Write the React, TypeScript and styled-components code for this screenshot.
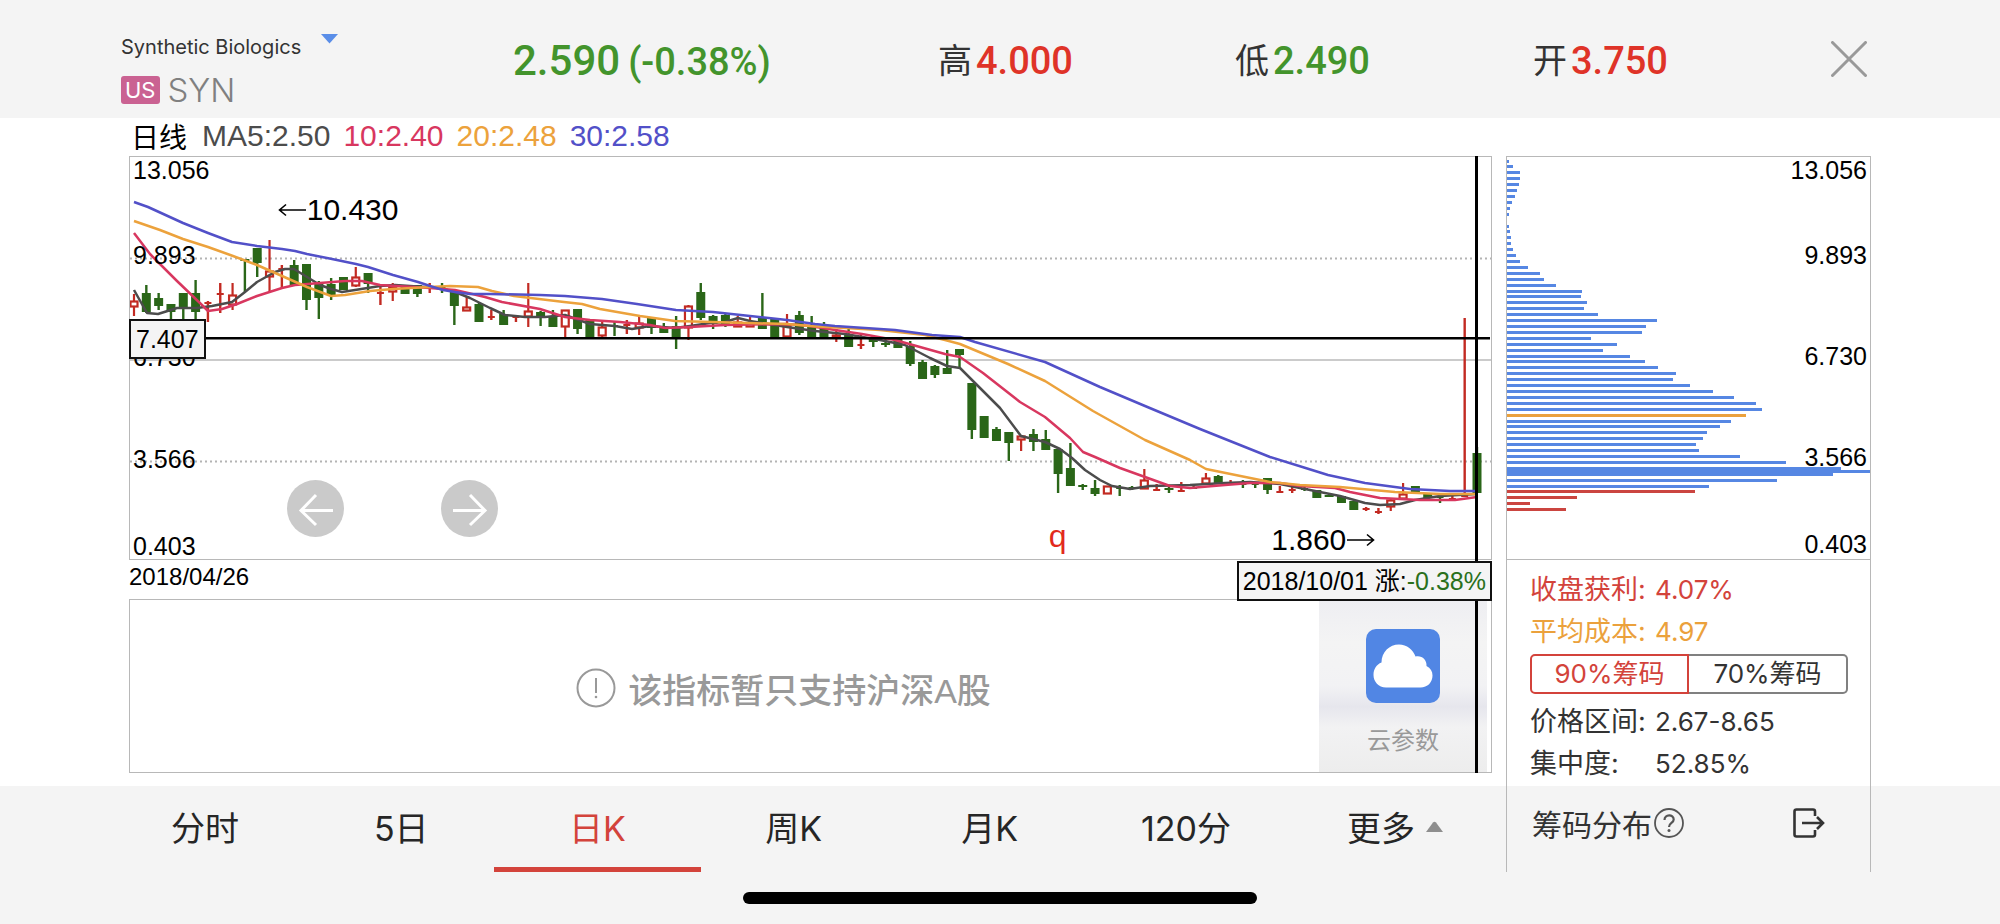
import React, { useState } from "react";
import styled, { createGlobalStyle } from "styled-components";

const sans = `"Liberation Sans", "Noto Sans CJK SC", sans-serif`;
const ui = `Inter, "Noto Sans CJK SC", sans-serif`;
const digits = `Roboto, "Noto Sans CJK SC", sans-serif`;

const color = {
  bar: "#f4f4f4",
  line: "#b8b8b8",
  text: "#333333",
  muted: "#999999",
  up: "#df3328",
  down: "#43942c",
  accent: "#d3433b",
  orange: "#eba13c",
  blue: "#5687e3",
  candleUp: "#c22a22",
  candleDown: "#2a6618",
  ma5: "#4c4c4c",
  ma10: "#d8375f",
  ma20: "#eca23c",
  ma30: "#5250c8",
};

const GlobalStyle = createGlobalStyle`
  *, *::before, *::after { box-sizing: border-box; }
  body { margin: 0; background: ${color.bar}; }
  button { margin: 0; padding: 0; border: 0; background: none; font: inherit; color: inherit; cursor: pointer; }
  svg { display: block; }
`;

const Page = styled.div`
  min-height: 100vh;
  display: flex;
  flex-direction: column;
  background: ${color.bar};
  color: ${color.text};
  font-family: ${ui};
`;

/* ---------- header ---------- */

const Header = styled.header`
  display: grid;
  grid-template-columns: 392fr 425fr 297fr 298fr 298fr 36px;
  align-items: center;
  min-height: 118px;
  padding: 0 133px 0 121px;
`;

const Identity = styled.div`
  align-self: start;
  padding-top: 34px;
`;

const NameButton = styled.button`
  display: flex;
  align-items: flex-start;
  gap: 20px;
  font-size: 20px;
  line-height: 26px;
`;

const Ticker = styled.div`
  display: flex;
  align-items: center;
  gap: 8px;
  margin-top: 16px;
  height: 28px;
  font-size: 33px;
  font-weight: 300;
  color: #808080;
`;

const Market = styled.span`
  padding: 0 4px;
  border-radius: 3px;
  background: #ca6292;
  color: #ffffff;
  font-size: 22px;
  font-weight: 400;
  line-height: 28px;
`;

const Price = styled.div`
  display: flex;
  align-items: baseline;
  gap: 8px;
  padding-top: 4px;
  font-family: ${digits};
  font-size: 38px;
  font-weight: 500;
  line-height: 44px;
  white-space: nowrap;
  color: ${color.down};
`;

const LastPrice = styled.strong`
  font-size: 42px;
  font-weight: 500;
`;

const Stat = styled.div<{ $tone: string }>`
  display: flex;
  align-items: center;
  gap: 4px;
  padding-top: 4px;
  font-size: 34px;
  line-height: 44px;
  white-space: nowrap;

  b {
    font-family: ${digits};
    font-size: 38px;
    font-weight: 500;
    color: ${(p) => p.$tone};
  }
`;

/* ---------- body ---------- */

const Body = styled.main`
  display: grid;
  grid-template-columns: minmax(0, 1fr) 365px;
  gap: 14px;
  padding: 0 129px;
  background: #ffffff;
`;

const ChartColumn = styled.section`
  position: relative;
  padding-bottom: 13px;
  font-family: ${sans};
`;

const Legend = styled.div`
  display: flex;
  align-items: center;
  gap: 13px;
  height: 38px;
  padding-bottom: 2px;
  font-size: 30px;
`;

const LegendTitle = styled.span`
  padding: 0 2px;
  font-size: 28px;
  color: #000000;
`;

const LegendItem = styled.span<{ $color: string }>`
  color: ${(p) => p.$color};
`;

const Plot = styled.div`
  position: relative;
  height: 404px;
  border: 1px solid ${color.line};
  color: #000000;
`;

const PlotDrawing = styled.svg`
  width: 100%;
  height: 100%;
`;

const AxisLabel = styled.span<{ $top: number; $side: "left" | "right" }>`
  position: absolute;
  top: ${(p) => p.$top}px;
  ${(p) => p.$side}: 3px;
  font-family: ${sans};
  font-size: 25px;
  line-height: 28px;
  color: #000000;
`;

const Cursor = styled.span`
  position: absolute;
  top: 162px;
  left: -1px;
  padding: 0 5px;
  border: 2px solid #111111;
  background: #f4f4f4;
  font-size: 25px;
  line-height: 36px;
`;

const Extreme = styled.span<{ $left: string; $top: number }>`
  position: absolute;
  left: ${(p) => p.$left};
  top: ${(p) => p.$top}px;
  display: flex;
  align-items: center;
  margin-left: -2px;
  font-size: 30px;
  line-height: 36px;
`;

const EventMark = styled.span`
  position: absolute;
  left: 67.5%;
  top: 361px;
  font-size: 32px;
  line-height: 36px;
  color: #e22a1c;
`;

const PanButtons = styled.div`
  position: absolute;
  left: 157px;
  top: 323px;
  display: flex;
  gap: 97px;
`;

const PanButton = styled.button`
  width: 57px;
  height: 57px;
  border-radius: 50%;
  background: #cacaca;
  display: grid;
  place-items: center;
`;

const DateRow = styled.div`
  position: relative;
  height: 39px;
  font-size: 24px;
  line-height: 33px;
  color: #000000;
`;

const DateTip = styled.div`
  position: absolute;
  z-index: 2;
  right: 0;
  top: 1px;
  padding: 0 4px;
  border: 2px solid #111111;
  background: #f4f4f4;
  font-size: 25px;
  line-height: 36px;
  white-space: nowrap;

  em {
    font-style: normal;
    color: #2a701c;
  }
`;

const Crosshair = styled.div`
  position: absolute;
  z-index: 1;
  top: 38px;
  bottom: 13px;
  right: 14px;
  width: 3px;
  background: #000000;
  pointer-events: none;
`;

const Indicator = styled.div`
  display: flex;
  height: 174px;
  padding-right: 4px;
  border: 1px solid ${color.line};
`;

const Notice = styled.p`
  flex: 1;
  display: flex;
  align-items: center;
  justify-content: center;
  gap: 12px;
  margin: 0;
  padding: 4px 0 0 118px;
  font-size: 34px;
  font-weight: 500;
  color: ${color.muted};
`;

const CloudButton = styled.button`
  display: flex;
  flex-direction: column;
  align-items: center;
  width: 168px;
  padding-top: 29px;
  background: linear-gradient(#eeeef2, #f4f4f4 25%, #f2f2f4 50%, #e6e6ed 62%, #f2f2f3 74%, #ededed);
  color: ${color.muted};
  font-size: 24px;
  line-height: 30px;

  svg {
    margin-bottom: 23px;
  }
`;

/* ---------- chip distribution ---------- */

const ChipColumn = styled.aside`
  margin-top: 38px;
  border: 1px solid ${color.line};
  border-bottom: 0;
`;

const ChipPlot = styled.div`
  position: relative;
  height: 403px;
  border-bottom: 1px solid ${color.line};
`;

const ChipFacts = styled.div`
  padding: 9px 22px 1px 23px;
`;

const Facts = styled.dl`
  margin: 0;
`;

const Fact = styled.div<{ $color: string }>`
  display: grid;
  grid-template-columns: 125px 1fr;
  font-size: 26px;
  line-height: 42px;
  color: ${(p) => p.$color};

  dt, dd { margin: 0; white-space: nowrap; }
  dt { font-size: 27px; }
`;

const Toggle = styled.div`
  display: grid;
  grid-template-columns: 1fr 1fr;
  margin: 1px 0 7px;
`;

const ToggleButton = styled.button<{ $active: boolean }>`
  height: 40px;
  border: 2px solid ${(p) => (p.$active ? color.accent : "#808080")};
  color: ${(p) => (p.$active ? color.accent : color.text)};
  font-size: 26px;
  line-height: 34px;

  &:first-child {
    border-radius: 5px 0 0 5px;
    ${(p) => (p.$active ? "" : "border-right: 0;")}
  }
  &:last-child {
    border-radius: 0 5px 5px 0;
    ${(p) => (p.$active ? "" : "border-left: 0;")}
  }
`;

/* ---------- footer ---------- */

const Footer = styled.footer`
  display: grid;
  grid-template-columns: minmax(0, 1fr) 365px;
  padding: 0 129px 0 107px;
`;

const Tabs = styled.nav`
  display: grid;
  grid-template-columns: repeat(6, 1fr) 222px;
  height: 86px;
`;

const Tab = styled.button<{ $active: boolean }>`
  display: flex;
  align-items: center;
  justify-content: center;
  gap: 11px;
  margin: 0 -5px;
  border-bottom: 5px solid ${(p) => (p.$active ? color.accent : "transparent")};
  color: ${(p) => (p.$active ? color.accent : "#262626")};
  font-size: 34px;
  white-space: nowrap;
`;

const ChipFooter = styled.div`
  display: flex;
  align-items: center;
  justify-content: space-between;
  padding: 0 45px 12px 25px;
  border: solid ${color.line};
  border-width: 0 1px;
  font-size: 30px;
`;

const ChipTitle = styled.button`
  display: flex;
  align-items: center;
  gap: 2px;
`;

const IconButton = styled.button`
  display: grid;
  place-items: center;
`;

const HomeBar = styled.div`
  width: 26%;
  max-width: 514px;
  height: 12px;
  margin: 20px auto;
  border-radius: 6px;
  background: #000000;
`;

/* ---------- data ---------- */

/* direction, high, body top, body bottom, low (in drawing units) */
type Candle = ["r" | "g", number, number, number, number];

const candles: Candle[] = [
  ["r", 294, 301, 307, 316], ["g", 285, 293, 312, 313], ["g", 293, 298, 306, 310], ["g", 304, 304, 312, 320],
  ["g", 293, 293, 309, 319], ["g", 280, 293, 312, 319], ["r", 301, 302, 303, 322], ["r", 283, 293, 294, 313],
  ["r", 283, 295, 305, 310], ["g", 259, 259, 261, 292], ["g", 248, 248, 263, 277], ["r", 240, 271, 277, 292],
  ["r", 265, 268, 269, 288], ["g", 260, 265, 285, 286], ["g", 264, 264, 300, 310], ["g", 281, 284, 298, 319],
  ["g", 278, 284, 295, 300], ["g", 277, 277, 290, 290], ["r", 267, 277, 286, 287], ["g", 273, 273, 284, 293],
  ["r", 287, 292, 293, 305], ["r", 283, 287, 292, 301], ["g", 285, 285, 294, 294], ["g", 285, 285, 294, 297],
  ["r", 283, 287, 288, 293], ["g", 283, 287, 288, 293], ["g", 290, 292, 306, 325], ["r", 297, 307, 311, 311],
  ["g", 302, 304, 322, 322], ["r", 310, 316, 317, 320], ["g", 310, 314, 325, 325], ["r", 315, 316, 317, 322],
  ["r", 283, 311, 317, 327], ["g", 311, 312, 317, 326], ["g", 310, 316, 327, 327], ["r", 310, 310, 327, 338],
  ["g", 309, 309, 329, 334], ["g", 320, 320, 338, 338], ["r", 322, 327, 336, 338], ["g", 322, 325, 326, 336],
  ["r", 320, 324, 325, 334], ["r", 316, 323, 328, 335], ["g", 318, 318, 328, 334], ["g", 323, 327, 333, 333],
  ["g", 316, 326, 339, 349], ["r", 305, 306, 328, 340], ["g", 283, 292, 318, 320], ["g", 315, 316, 324, 329],
  ["g", 314, 315, 324, 327], ["r", 316, 322, 327, 327], ["r", 316, 323, 327, 327], ["g", 293, 317, 329, 329],
  ["g", 318, 318, 338, 338], ["r", 314, 325, 337, 338], ["g", 311, 315, 333, 335], ["g", 316, 326, 337, 337],
  ["g", 322, 326, 337, 337], ["r", 329, 335, 337, 342], ["g", 329, 335, 347, 347], ["r", 335, 344, 345, 349],
  ["g", 336, 338, 342, 347], ["g", 337, 343, 345, 347], ["g", 338, 338, 348, 348], ["g", 341, 346, 364, 366],
  ["g", 360, 362, 379, 379], ["g", 365, 366, 375, 378], ["g", 350, 368, 374, 374], ["g", 349, 349, 355, 367],
  ["g", 383, 383, 430, 439], ["g", 416, 416, 438, 438], ["g", 427, 429, 441, 441], ["g", 432, 432, 443, 461],
  ["r", 435, 436, 440, 451], ["g", 429, 434, 442, 451], ["g", 430, 439, 450, 450], ["g", 449, 449, 474, 493],
  ["g", 443, 468, 486, 486], ["g", 484, 485, 487, 490], ["g", 480, 488, 494, 496], ["r", 486, 486, 494, 494],
  ["g", 485, 487, 488, 496], ["g", 486, 487, 488, 490], ["r", 469, 480, 489, 489], ["r", 484, 489, 490, 491],
  ["g", 487, 488, 490, 493], ["r", 482, 490, 491, 491], ["g", 486, 487, 488, 489], ["r", 473, 478, 484, 485],
  ["g", 475, 476, 483, 483], ["r", 480, 482, 483, 484], ["g", 480, 483, 484, 488], ["g", 482, 483, 484, 488],
  ["g", 478, 478, 490, 494], ["r", 486, 491, 492, 493], ["r", 487, 489, 490, 493], ["g", 487, 488, 489, 491],
  ["g", 490, 490, 498, 498], ["g", 494, 495, 497, 497], ["g", 496, 496, 503, 503], ["g", 501, 501, 510, 510],
  ["r", 507, 508, 509, 511], ["r", 508, 511, 512, 514], ["r", 498, 500, 507, 511], ["r", 483, 494, 499, 500],
  ["g", 486, 486, 493, 493], ["g", 493, 493, 498, 498], ["g", 494, 496, 497, 503], ["r", 496, 498, 499, 500],
  ["r", 318, 495, 496, 497], ["g", 447, 453, 493, 493],
];

const averages = [
  {
    color: color.ma5,
    points:
      "134,290 147,313 158,314 177,308 197,308 212,306 232,302 245,292 257,282 275,272 285,269 294,269 307,277 320,285 331,289 342,292 355,290 380,286 395,285 425,287 440,288 455,292 470,298 490,308 505,315 525,317 545,317 565,315 590,324 615,326 632,329 650,326 675,328 690,326 710,323 725,322 738,318 750,321 787,327 815,331 845,334 880,340 905,345 930,358 947,366 960,368 975,383 1000,408 1021,436 1045,442 1060,449 1072,458 1085,470 1100,480 1112,486 1130,489 1150,486 1190,485 1225,483 1250,482 1280,484 1310,490 1340,496 1365,503 1380,505 1400,504 1415,500 1440,496 1477,494",
  },
  {
    color: color.ma10,
    points:
      "134,233 150,254 177,281 202,305 208,311 222,309 237,304 257,296 282,288 295,285 320,283 345,281 362,281 380,285 430,288 455,290 468,293 485,297 502,302 540,309 565,317 590,320 620,322 650,325 665,328 690,327 725,325 787,324 810,326 835,330 862,334 895,340 920,347 945,354 960,357 983,373 1020,402 1045,417 1070,438 1083,452 1095,457 1120,468 1145,477 1170,486 1190,488 1225,485 1250,483 1280,483 1300,486 1335,488 1350,492 1380,498 1420,500 1455,500 1477,497",
  },
  {
    color: color.ma20,
    points:
      "134,221 160,230 183,239 208,247 233,256 257,265 282,276 307,287 331,296 345,295 370,291 393,289 430,287 450,286 478,287 492,291 514,296 564,302 582,304 600,309 640,316 675,321 713,322 787,324 810,326 880,330 925,335 945,340 960,344 1008,364 1045,381 1093,411 1145,440 1190,460 1206,469 1270,482 1300,485 1340,487 1395,492 1440,494 1477,494",
  },
  {
    color: color.ma30,
    points:
      "134,202 148,207 183,223 208,233 232,242 257,246 282,249 295,251 307,254 332,259 356,264 368,267 393,275 418,282 430,286 443,290 455,292 470,294 490,294 540,295 565,296 602,299 637,304 676,310 713,312 750,316 787,320 815,324 835,326 895,330 932,335 960,337 975,342 1045,362 1100,387 1145,406 1200,429 1270,457 1312,470 1328,475 1365,483 1410,489 1450,491 1477,491",
  },
];

const chips = [
  2, 6, 13, 13, 12, 10, 8, 5, 3, 2, 0, 2, 3, 4, 4, 6, 9, 13, 21, 33, 37, 49, 75, 74, 80, 77, 91, 150, 139, 135, 84, 110,
  96, 123, 138, 151, 169, 166, 183, 206, 227, 249, 255, 239, 224, 213, 200, 196, 189, 192, 233, 279, 334, 326, 270,
  202, 188, 70, 23, 59,
];
const AVERAGE_CHIP = 43;
const FIRST_PROFIT_CHIP = 56;

const tabs = ["分时", "5日", "日K", "周K", "月K", "120分", "更多"];

/* ---------- drawings ---------- */

const candleX = (i: number) => 134 + (i * 1343) / 109;

function CandleMark({ candle, index }: { candle: Candle; index: number }) {
  const [dir, high, top, bottom, low] = candle;
  const x = candleX(index);
  const stroke = dir === "r" ? color.candleUp : color.candleDown;
  const flat = bottom - top < 2;
  const halfWidth = flat ? 3 : 4;
  if (dir === "g" || flat) {
    return (
      <g stroke={stroke} fill={stroke}>
        <line x1={x} x2={x} y1={high} y2={low} strokeWidth={2.4} />
        <rect x={x - halfWidth - 0.5} y={top} width={halfWidth * 2 + 1} height={Math.max(bottom - top, 2)} stroke="none" />
      </g>
    );
  }
  return (
    <g stroke={stroke} strokeWidth={2.2} fill="none">
      <line x1={x} x2={x} y1={high} y2={top} />
      <line x1={x} x2={x} y1={bottom} y2={low} />
      <rect x={x - 3.5} y={top + 0.5} width={7} height={Math.max(bottom - top - 1, 2)} />
    </g>
  );
}

function PriceDrawing() {
  return (
    <PlotDrawing viewBox="130 157 1361 402" preserveAspectRatio="none" aria-hidden="true">
      <g stroke="#b4b4b4" strokeWidth={2} strokeDasharray="2 3">
        <line x1={130} x2={1491} y1={258.5} y2={258.5} />
        <line x1={130} x2={1491} y1={461.5} y2={461.5} />
      </g>
      <line x1={130} x2={1491} y1={360} y2={360} stroke="#cbcbcb" strokeWidth={2} />
      {candles.map((candle, i) => (
        <CandleMark key={i} candle={candle} index={i} />
      ))}
      {averages.map((line) => (
        <polyline key={line.color} points={line.points} fill="none" stroke={line.color} strokeWidth={2.5} strokeLinejoin="round" />
      ))}
      <line x1={130} x2={1490} y1={338.3} y2={338.3} stroke="#000000" strokeWidth={2.4} />
    </PlotDrawing>
  );
}

function ChipDrawing() {
  return (
    <PlotDrawing viewBox="0 157 363 402" preserveAspectRatio="none" aria-hidden="true">
      {chips.map((width, i) => (
        <rect
          key={i}
          x={0}
          y={Math.round(161 + i * 5.91 - 1.5)}
          width={width}
          height={3}
          fill={i === AVERAGE_CHIP ? color.orange : i >= FIRST_PROFIT_CHIP ? "#cb4540" : color.blue}
        />
      ))}
      <rect x={0} y={467} width={326} height={8} fill={color.blue} />
      <rect x={0} y={470} width={363} height={3} fill={color.blue} />
    </PlotDrawing>
  );
}

function LongArrow({ flip = false }: { flip?: boolean }) {
  return (
    <svg width="29" height="16" viewBox="0 0 29 16" fill="none" stroke="#000" strokeWidth="1.6">
      {flip ? <path d="M1 8h26M21 2.5l6.5 5.5-6.5 5.5" /> : <path d="M28 8H2M8 2.5L1.5 8 8 13.5" />}
    </svg>
  );
}

export default function App() {
  const [tab, setTab] = useState("日K");
  const [range, setRange] = useState("90");

  return (
    <>
      <GlobalStyle />
      <Page>
        <Header>
          <Identity>
            <NameButton type="button">
              Synthetic Biologics
              <svg width="17" height="10" viewBox="0 0 17 10" aria-hidden="true">
                <path d="M0 0h17L8.5 9.5z" fill="#5a8ee8" />
              </svg>
            </NameButton>
            <Ticker>
              <Market>US</Market>
              <span>SYN</span>
            </Ticker>
          </Identity>
          <Price>
            <LastPrice>2.590</LastPrice>
            <span>(-0.38%)</span>
          </Price>
          <Stat $tone={color.up}>高<b>4.000</b></Stat>
          <Stat $tone={color.down}>低<b>2.490</b></Stat>
          <Stat $tone={color.up}>开<b>3.750</b></Stat>
          <IconButton type="button" aria-label="关闭">
            <svg width="36" height="36" viewBox="0 0 36 36" stroke="#999" strokeWidth="3" strokeLinecap="round">
              <path d="M1.5 1.5l33 33M34.5 1.5l-33 33" />
            </svg>
          </IconButton>
        </Header>

        <Body>
          <ChartColumn>
            <Legend>
              <LegendTitle>日线</LegendTitle>
              <LegendItem $color={color.ma5}>MA5:2.50</LegendItem>
              <LegendItem $color={color.ma10}>10:2.40</LegendItem>
              <LegendItem $color={color.ma20}>20:2.48</LegendItem>
              <LegendItem $color={color.ma30}>30:2.58</LegendItem>
            </Legend>
            <Plot>
              <PriceDrawing />
              <AxisLabel $side="left" $top={-1}>13.056</AxisLabel>
              <AxisLabel $side="left" $top={84}>9.893</AxisLabel>
              <AxisLabel $side="left" $top={186}>6.730</AxisLabel>
              <AxisLabel $side="left" $top={288}>3.566</AxisLabel>
              <AxisLabel $side="left" $top={375}>0.403</AxisLabel>
              <Cursor>7.407</Cursor>
              <Extreme $left="11%" $top={35}><LongArrow />10.430</Extreme>
              <Extreme $left="84%" $top={365}>1.860<LongArrow flip /></Extreme>
              <EventMark>q</EventMark>
              <PanButtons>
                <PanButton type="button" aria-label="向左">
                  <svg width="36" height="36" viewBox="0 0 36 36" fill="none" stroke="#fff" strokeWidth="3">
                    <path d="M35 19.5H3M18 4L3 19.5 18 34" />
                  </svg>
                </PanButton>
                <PanButton type="button" aria-label="向右">
                  <svg width="36" height="36" viewBox="0 0 36 36" fill="none" stroke="#fff" strokeWidth="3">
                    <path d="M1 19.5h32M18 4l15 15.5L18 34" />
                  </svg>
                </PanButton>
              </PanButtons>
            </Plot>
            <DateRow>
              2018/04/26
              <DateTip>2018/10/01 涨:<em>-0.38%</em></DateTip>
            </DateRow>
            <Indicator>
              <Notice>
                <svg width="40" height="40" viewBox="0 0 40 40" fill="none" stroke="#999" strokeWidth="2" aria-hidden="true">
                  <circle cx="20" cy="20" r="18.5" />
                  <path d="M20 10v15" />
                  <circle cx="20" cy="29" r="1.3" fill="#999" stroke="none" />
                </svg>
                该指标暂只支持沪深A股
              </Notice>
              <CloudButton type="button">
                <svg width="74" height="74" viewBox="0 0 74 74" aria-hidden="true">
                  <rect width="74" height="74" rx="10" fill="#5186e4" />
                  <path
                    d="M20 58.500C12.500 58.500 7.500 52.500 7.500 46c0-6 3-10.500 8-12.500C15.500 23 23.500 15.500 33 15.500c8 0 14 5 16.500 12 6-1.500 11.500 3 11 9.500 4 2 6 5.500 6 9.500 0 7-5 12-12 12z"
                    fill="#fff"
                  />
                </svg>
                云参数
              </CloudButton>
            </Indicator>
            <Crosshair />
          </ChartColumn>

          <ChipColumn>
            <ChipPlot>
              <ChipDrawing />
              <AxisLabel $side="right" $top={-1}>13.056</AxisLabel>
              <AxisLabel $side="right" $top={84}>9.893</AxisLabel>
              <AxisLabel $side="right" $top={185}>6.730</AxisLabel>
              <AxisLabel $side="right" $top={286}>3.566</AxisLabel>
              <AxisLabel $side="right" $top={373}>0.403</AxisLabel>
            </ChipPlot>
            <ChipFacts>
              <Facts>
                <Fact $color={color.accent}><dt>收盘获利:</dt><dd>4.07%</dd></Fact>
                <Fact $color={color.orange}><dt>平均成本:</dt><dd>4.97</dd></Fact>
              </Facts>
              <Toggle>
                <ToggleButton type="button" $active={range === "90"} onClick={() => setRange("90")}>90%筹码</ToggleButton>
                <ToggleButton type="button" $active={range === "70"} onClick={() => setRange("70")}>70%筹码</ToggleButton>
              </Toggle>
              <Facts>
                <Fact $color={color.text}><dt>价格区间:</dt><dd>2.67-8.65</dd></Fact>
                <Fact $color={color.text}><dt>集中度:</dt><dd>52.85%</dd></Fact>
              </Facts>
            </ChipFacts>
          </ChipColumn>
        </Body>

        <Footer>
          <Tabs>
            {tabs.map((name) => (
              <Tab key={name} type="button" $active={tab === name} onClick={() => setTab(name)}>
                {name}
                {name === "更多" && (
                  <svg width="17" height="11" viewBox="0 0 17 11" aria-hidden="true">
                    <path d="M0 11L7 1.500Q8.500 0 10 1.500L17 11z" fill="#8e8e8e" />
                  </svg>
                )}
              </Tab>
            ))}
          </Tabs>
          <ChipFooter>
            <ChipTitle type="button">
              筹码分布
              <svg width="30" height="30" viewBox="0 0 30 30" fill="none" stroke="#555" strokeWidth="1.8" aria-hidden="true">
                <circle cx="15" cy="15" r="14" />
                <path d="M10.500 12c0-6 9.200-6 9.200-.5 0 3.500-4.700 3.500-4.700 7.500" strokeWidth="2.200" />
                <circle cx="15" cy="22.500" r="1.500" fill="#555" stroke="none" />
              </svg>
            </ChipTitle>
            <IconButton type="button" aria-label="退出">
              <svg width="32" height="30" viewBox="0 0 32 30" fill="none" stroke="#333" strokeWidth="2.600">
                <path d="M22 8V3.500Q22 1.500 20 1.500H3.500Q1.500 1.500 1.500 3.500v23q0 2 2 2H20q2 0 2-2V22" />
                <path d="M9 15h21M24 9l6 6-6 6" />
              </svg>
            </IconButton>
          </ChipFooter>
        </Footer>
        <HomeBar />
      </Page>
    </>
  );
}
